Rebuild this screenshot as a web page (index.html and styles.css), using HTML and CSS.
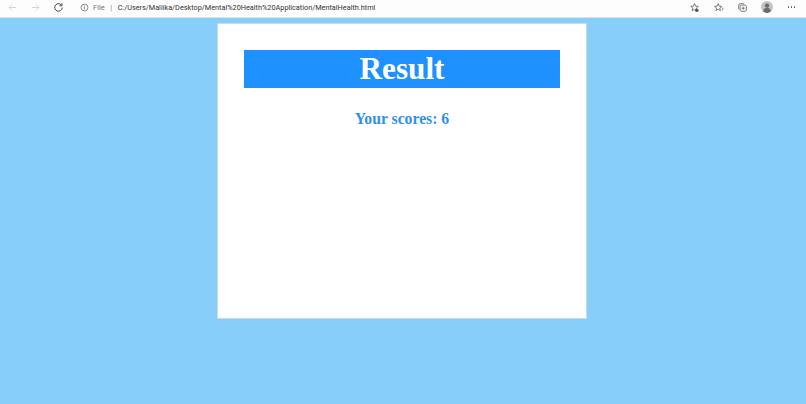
FILE: index.html
```html
<!DOCTYPE html>
<html lang="en">
<head>
<meta charset="utf-8">
<title>Result</title>
<link rel="stylesheet" href="styles.css">
</head>
<body>
<header class="toolbar">
  <div class="nav">
    <svg class="ico" viewBox="0 0 16 16"><path d="M13.500 8H3M7.500 3.500 3 8l4.500 4.500" class="dim"/></svg>
    <svg class="ico" viewBox="0 0 16 16"><path d="M2.500 8H13M8.500 3.500 13 8l-4.500 4.500" class="dim"/></svg>
    <svg class="ico" viewBox="0 0 16 16"><path d="M12.800 5.200A5.500 5.500 0 1 0 13.500 8M13 1.800v3.700H9.300" class="dark"/></svg>
  </div>
  <div class="address">
    <svg class="info" viewBox="0 0 12 12"><circle cx="6" cy="6" r="4.600" class="mid"/><path d="M6 5.300v3.200M6 3.400v1" class="mid"/></svg>
    <span class="scheme">File</span>
    <span class="sep">|</span>
    <span class="url">C:/Users/Mallika/Desktop/Mental%20Health%20Application/MentalHealth.html</span>
  </div>
  <div class="actions">
    <svg class="ico" viewBox="0 0 16 16"><path d="M8 2.200 9.600 6l3.900.3-3 2.500.4 1.500M8 2.200 6.400 6l-3.900.3 3 2.500-.9 3.800L8 10.800" class="dark-thin"/><circle cx="11.300" cy="12" r="2.600" class="fill"/></svg>
    <svg class="ico" viewBox="0 0 16 16"><path d="M7.500 2.500 9 6l3.800.3-2.900 2.500.9 3.700-3.300-2-3.300 2 .9-3.700L2.200 6.300 6 6zM13 9h2M13 11.500h2" class="dark-thin"/></svg>
    <svg class="ico" viewBox="0 0 16 16"><rect x="4.500" y="4.500" width="9" height="9" rx="2" class="dark-thin"/><path d="M2.500 10.500V4.500a2 2 0 0 1 2-2h6M9 6.800v4.400M6.800 9h4.400" class="dark-thin"/></svg>
    <svg class="avatar" viewBox="0 0 14 14"><circle cx="7" cy="7" r="7" fill="#c4c4c4"/><circle cx="7" cy="5.400" r="2.500" fill="#6b6b6b"/><path d="M2.500 12c.6-3 2.400-4 4.500-4s3.900 1 4.500 4a7 7 0 0 1-9 0z" fill="#6b6b6b"/></svg>
    <div class="more"><i></i><i></i><i></i></div>
  </div>
</header>
<main class="stage">
  <section class="card">
    <h1 class="title">Result</h1>
    <p class="score">Your scores: 6</p>
  </section>
</main>
</body>
</html>
```
FILE: styles.css
```css
html, body { margin: 0; padding: 0; height: 100%; overflow: hidden; }
body { background: #87cefa; display: flex; flex-direction: column; }
.toolbar {
  box-sizing: border-box;
  height: 18px;
  padding-bottom: 3px;
  flex: none;
  background: #fdfdfd;
  border-bottom: 1px solid #d9e4ea;
  display: flex;
  align-items: center;
  font-family: Roboto, "Noto Sans", sans-serif;
}
.nav { display: flex; align-items: center; gap: 12px; padding-left: 7px; width: 60px; flex: none; }
.ico { width: 11px; height: 11px; flex: none; fill: none; }
.dim { stroke: #d0d0d0; stroke-width: 1.300; fill: none; }
.dark { stroke: #444; stroke-width: 1.400; fill: none; }
.dark-thin { stroke: #555; stroke-width: 1.100; fill: none; }
.mid { stroke: #666; stroke-width: 1; fill: none; }
.fill { fill: #555; }
.address { flex: 1; display: flex; align-items: center; padding-left: 13px; font-size: 7.500px; white-space: nowrap; }
.info { width: 9px; height: 9px; margin-right: 4px; flex: none; }
.scheme { color: #777; }
.sep { color: #888; margin: 0 5.500px 0 5.500px; }
.url { color: #333; font-size: 7.300px; }
.actions { display: flex; align-items: center; gap: 13px; padding-right: 11px; }
.avatar { width: 12px; height: 12px; flex: none; }
.more { display: flex; gap: 1.500px; padding-left: 2px; }
.more i { width: 1.500px; height: 1.500px; border-radius: 50%; background: #555; }
.stage { flex: 1; display: flex; justify-content: center; align-items: flex-start; padding: 5px 2px 0 0; }
.card {
  box-sizing: border-box;
  width: 370px;
  height: 296px;
  background: #fff;
  border: 1px solid #c9dbe6;
  padding: 26px 26px 0;
  font-family: "Liberation Serif", "Times New Roman", serif;
  font-weight: bold;
  text-align: center;
}
.title {
  margin: 0;
  height: 38px;
  line-height: 38px;
  background: #1e90ff;
  color: #fff;
  font-size: 31.200px;
}
.score { margin: 20px 0 0; color: #2f8fec; font-size: 15.700px; line-height: 21px; }
```
